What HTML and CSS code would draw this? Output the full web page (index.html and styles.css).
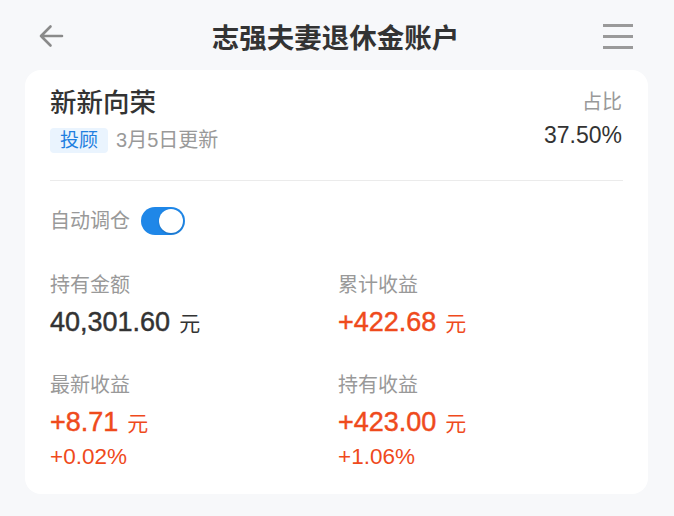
FILE: index.html
```html
<!DOCTYPE html>
<html lang="zh-CN">
<head>
<meta charset="utf-8">
<title>志强夫妻退休金账户</title>
<link rel="stylesheet" href="styles.css">
</head>
<body>
<div class="page">
  <header class="nav">
    <svg class="nav-back" width="26" height="26" viewBox="0 0 26 26" aria-hidden="true">
      <path d="M24 13H3M12.5 3.5L3 13l9.5 9.5" fill="none" stroke="#8a8a8a" stroke-width="2.6" stroke-linecap="round" stroke-linejoin="round"/>
    </svg>
    <h1 class="nav-title">志强夫妻退休金账户</h1>
    <svg class="nav-menu" width="30" height="26" viewBox="0 0 30 26" aria-hidden="true">
      <path d="M0 2.5h30M0 13.5h30M0 24.5h30" fill="none" stroke="#9a9a9a" stroke-width="3"/>
    </svg>
  </header>

  <section class="card">
    <div class="card-top">
      <div class="fund">
        <div class="fund-name">新新向荣</div>
        <div class="fund-meta">
          <span class="tag">投顾</span>
          <span class="updated">3月5日更新</span>
        </div>
      </div>
      <div class="ratio">
        <div class="ratio-label">占比</div>
        <div class="ratio-value">37.50%</div>
      </div>
    </div>

    <div class="divider"></div>

    <div class="auto">
      <span class="auto-label">自动调仓</span>
      <span class="toggle"><span class="knob"></span></span>
    </div>

    <div class="stats">
      <div class="stat">
        <div class="stat-label">持有金额</div>
        <div class="stat-value">40,301.60<span class="unit">元</span></div>
      </div>
      <div class="stat">
        <div class="stat-label">累计收益</div>
        <div class="stat-value up">+422.68<span class="unit">元</span></div>
      </div>
      <div class="stat">
        <div class="stat-label">最新收益</div>
        <div class="stat-value up">+8.71<span class="unit">元</span></div>
        <div class="stat-pct up">+0.02%</div>
      </div>
      <div class="stat">
        <div class="stat-label">持有收益</div>
        <div class="stat-value up">+423.00<span class="unit">元</span></div>
        <div class="stat-pct up">+1.06%</div>
      </div>
    </div>
  </section>
</div>
</body>
</html>
```

FILE: styles.css
```css
* { box-sizing: border-box; margin: 0; padding: 0; }

html, body {
  background: #f7f8fa;
}

body {
  font-family: "Liberation Sans", "Noto Sans CJK SC", sans-serif;
  color: #333;
  width: 674px;
  height: 516px;
  overflow: hidden;
}

.page {
  display: flex;
  flex-direction: column;
}

.nav {
  height: 70px;
  display: flex;
  align-items: center;
  justify-content: space-between;
  padding: 0 41px 0 38px;
  padding-top: 2px;
}

.nav-back { display: block; }
.nav-menu { display: block; }

.nav-title {
  font-size: 27.5px;
  font-weight: 700;
  color: #333;
  line-height: 36px;
  font-family: "Noto Sans CJK SC", sans-serif;
  margin-left: 4px;
}

.card {
  margin: 0 26px 0 25px;
  background: #fff;
  border-radius: 16px;
  padding: 13px 25px 24px 25px;
  display: flex;
  flex-direction: column;
}

.card-top {
  display: flex;
  justify-content: space-between;
  align-items: flex-start;
}

.fund-name {
  font-family: "Noto Sans CJK SC", sans-serif;
  font-size: 26.5px;
  font-weight: 500;
  line-height: 36px;
  color: #333;
}

.fund-meta {
  display: flex;
  align-items: center;
  margin-top: 9px;
  gap: 8px;
}

.tag {
  height: 25px;
  line-height: 25px;
  padding: 0 10px;
  border-radius: 4px;
  background: #eaf4fe;
  color: #1f7fe0;
  font-size: 19px;
}

.updated {
  font-size: 20px;
  color: #999;
  line-height: 25px;
}

.ratio {
  text-align: right;
  margin-top: 5px;
  margin-right: 1px;
}

.ratio-label {
  font-size: 20px;
  line-height: 28px;
  color: #999;
}

.ratio-value {
  font-size: 23px;
  line-height: 30px;
  color: #333;
  margin-top: 4px;
}

.divider {
  height: 1px;
  background: #ebebeb;
  margin-top: 27px;
}

.auto {
  display: flex;
  align-items: center;
  margin-top: 25px;
  height: 30px;
  gap: 11px;
}

.auto-label {
  font-size: 20px;
  color: #999;
  line-height: 30px;
}

.toggle {
  position: relative;
  width: 44px;
  height: 28px;
  border-radius: 14px;
  background: #1f87e8;
  display: inline-block;
}

.knob {
  position: absolute;
  right: 2px;
  top: 2px;
  width: 24px;
  height: 24px;
  border-radius: 50%;
  background: #fff;
  box-shadow: 0 1px 2px rgba(0, 0, 0, 0.18);
}

.stats {
  display: grid;
  grid-template-columns: 288px 1fr;
  row-gap: 32px;
  margin-top: 35px;
}

.stat-label {
  font-size: 20px;
  line-height: 28px;
  color: #999;
}

.stat-value {
  font-family: "Liberation Sans", "Noto Sans CJK SC", sans-serif;
  font-size: 27px;
  line-height: 34px;
  margin-top: 6px;
  color: #333;
  -webkit-text-stroke: 0.45px currentColor;
}

.unit {
  font-family: "Noto Sans CJK SC", sans-serif;
  font-weight: 400;
  font-size: 21px;
  margin-left: 9px;
  -webkit-text-stroke: 0;
}

.stat-pct {
  font-size: 22.5px;
  line-height: 26px;
  margin-top: 5px;
}

.up { color: #ef4a1c; }
```
